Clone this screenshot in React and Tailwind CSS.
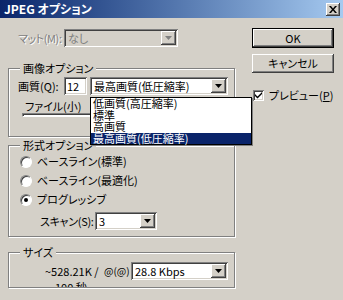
import React from 'react'

const font = "[font-family:'Noto_Sans_CJK_JP','Liberation_Sans',sans-serif]"
const raised = 'shadow-[inset_-1px_-1px_#404040,inset_1px_1px_#ffffff,inset_-2px_-2px_#808080,inset_2px_2px_#d4d0c8]'
const sunken = 'shadow-[inset_1px_1px_#808080,inset_-1px_-1px_#ffffff,inset_2px_2px_#404040,inset_-2px_-2px_#d4d0c8]'

function Arrow({ disabled }) {
  return (
    <svg width="7" height="4" viewBox="0 0 7 4">
      <path d="M0 0h7L3.5 4z" fill={disabled ? '#808080' : '#000'} />
    </svg>
  )
}

function Combo({ value, w, disabled }) {
  return (
    <div className={`relative flex h-[18px] shrink-0 items-center ${sunken} ${disabled ? 'bg-[#d4d0c8]' : 'bg-white'}`} style={{ width: w }}>
      <span className={`pl-[4px] leading-none ${disabled ? 'text-[#808080]' : 'text-black'}`}>{value}</span>
      <div className={`absolute right-[2px] top-[2px] flex h-[14px] w-[15px] items-center justify-center bg-[#d4d0c8] ${raised}`}>
        <Arrow disabled={disabled} />
      </div>
    </div>
  )
}

function Group({ label, className, children }) {
  return (
    <div className={`relative border border-[#808080] shadow-[inset_1px_1px_#ffffff,1px_1px_#ffffff] ${className}`}>
      <span className="absolute -top-[8px] left-[11px] bg-[#d4d0c8] px-[3px] leading-[14px]">{label}</span>
      {children}
    </div>
  )
}

function Radio({ checked, label }) {
  return (
    <div className="flex h-[19px] items-center pl-[11px]">
      <div className="flex h-[12px] w-[12px] items-center justify-center rounded-full border border-b-white border-l-[#808080] border-r-white border-t-[#808080] bg-white shadow-[inset_1px_1px_#404040]">
        {checked && <div className="h-[4px] w-[4px] rounded-full bg-black" />}
      </div>
      <span className="pl-[5px] leading-none">{label}</span>
    </div>
  )
}

export default function App() {
  const items = ['低画質(高圧縮率)', '標準', '高画質', '最高画質(低圧縮率)']
  return (
    <div className={`relative h-[300px] w-[343px] overflow-hidden whitespace-nowrap bg-[#d4d0c8] text-[11px] text-black ${font} [font-feature-settings:'palt']`}>
      <div className="flex h-[18px] items-center justify-between bg-gradient-to-r from-[#0a246a] to-[#a6caf0] pl-[4px] pr-[3px]">
        <span className="text-[12px] font-bold leading-none text-white">JPEG オプション</span>
        <div className={`flex h-[13px] w-[14px] items-center justify-center bg-[#d4d0c8] ${raised}`}>
          <svg width="8" height="7" viewBox="0 0 8 7">
            <path d="M0 0h2l2 2.5L6 0h2L5 3.5 8 7H6L4 4.5 2 7H0l3-3.5z" fill="#000" />
          </svg>
        </div>
      </div>

      <div className="flex">
        <div className="ml-[8px] w-[228px]">
          <div className="mt-[11px] flex h-[18px] items-center">
            <span className="w-[56px] pl-[10px] tracking-[-0.4px] text-[#808080] [text-shadow:1px_1px_#ffffff]">マット(M):</span>
            <Combo value="なし" w={114} disabled />
          </div>

          <Group label="画像オプション" className="mt-[21px] h-[69px] w-[227px]">
            <div className="mt-[8px] flex h-[18px] items-center">
              <span className="w-[55px] pl-[9px]">画質(Q):</span>
              <div className={`flex h-[18px] w-[23px] items-center bg-white pl-[3px] ${sunken}`}>12</div>
              <div className="ml-[3px]">
                <Combo value="最高画質(低圧縮率)" w={138} />
              </div>
            </div>
            <div className="pl-[16px] pt-[5px] leading-[12px]">ファイル(小)</div>
            <div className="ml-[13px] mt-[1px] h-[4px] w-[200px] border border-b-white border-l-[#808080] border-r-white border-t-[#808080] bg-white shadow-[inset_1px_1px_#404040]" />
          </Group>

          <Group label="形式オプション" className="mt-[8px] h-[92px] w-[227px]">
            <div className="pt-[6px]">
              <Radio label="ベースライン(標準)" />
              <Radio label="ベースライン(最適化)" />
              <Radio checked label="プログレッシブ" />
            </div>
            <div className="mt-[2px] flex h-[20px] items-center">
              <span className="w-[86px] pl-[31px] tracking-[-0.3px]">スキャン(S):</span>
              <Combo value="3" w={62} />
            </div>
          </Group>

          <Group label="サイズ" className="mt-[15px] h-[36px] w-[227px]">
            <div className="flex h-[34px] overflow-hidden pt-[9px]">
              <div className="w-[95px] pl-[36px] pt-[3px] leading-[13px]">
                <div>~528.21K /</div>
                <div className="mt-[3px] pl-[10px]">100 秒</div>
              </div>
              <span className="w-[27px] pt-[4px] text-[10px] leading-none">@(@)</span>
              <Combo value="28.8 Kbps" w={97} />
            </div>
          </Group>
        </div>

        <div className="ml-[16px] w-[82px] pt-[10px]">
          <div className="flex h-[20px] items-center justify-center border border-black bg-[#d4d0c8]">
            <div className={`flex h-full w-full items-center justify-center ${raised}`}>OK</div>
          </div>
          <div className={`mt-[6px] flex h-[19px] items-center justify-center ${raised}`}>キャンセル</div>
          <div className="mt-[17px] flex items-center pl-[1px]">
            <div className={`flex h-[11px] w-[11px] items-center justify-center bg-white ${sunken}`}>
              <svg width="7" height="7" viewBox="0 0 7 7">
                <path d="M0 2l2.5 2.5L7 0v2L2.5 6.5 0 4z" fill="#000" />
              </svg>
            </div>
            <span className="pl-[5px] leading-none">プレビュー(<span className="underline">P</span>)</span>
          </div>
        </div>
      </div>

      <div className="absolute left-[90px] top-[97px] w-[162px] border border-black bg-white shadow-[1px_1px_#808080]">
        {items.map((it, i) => (
          <div key={it} className={`h-[11.5px] pl-[2px] leading-[11.5px] ${i === 3 ? 'bg-[#0a246a] text-white' : ''}`}>{it}</div>
        ))}
      </div>
    </div>
  )
}
